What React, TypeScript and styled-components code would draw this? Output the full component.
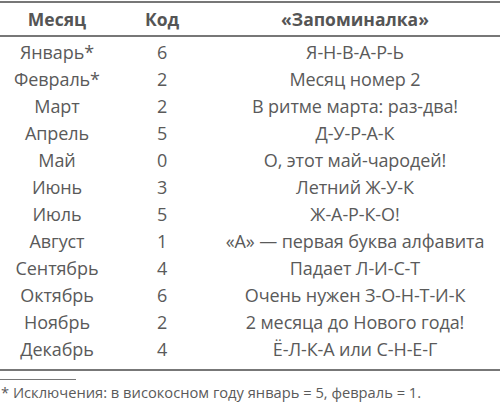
import React from "react";
import styled, { createGlobalStyle } from "styled-components";

const Global = createGlobalStyle`
  html, body { margin: 0; padding: 0; background: #fff; }
  body { font-family: "Open Sans", "Noto Sans", sans-serif; color: #555; }
`;

const Page = styled.div`
  width: 500px;
  padding-top: 1px;
`;

const Table = styled.div`
  border-top: 2px solid #777;
  border-bottom: 2px solid #777;
`;

const Row = styled.div<{ $head?: boolean; $last?: boolean }>`
  display: grid;
  grid-template-columns: 114px 96px 1fr;
  height: ${(p) => (p.$head ? "32px" : "27px")};
  align-items: center;
  padding-bottom: ${(p) => (p.$last ? "7px" : "0")};
  border-bottom: ${(p) => (p.$head ? "2px solid #777" : "none")};
  margin-bottom: ${(p) => (p.$head ? "1px" : "0")};
  font-size: ${(p) => (p.$head ? "17.5px" : "18px")};
  font-weight: ${(p) => (p.$head ? 700 : 400)};
  color: ${(p) => (p.$head ? "#555" : "#5a5a5a")};
  letter-spacing: ${(p) => (p.$head ? "0" : "-0.1px")};
`;

const Cell = styled.div`
  text-align: center;
  white-space: nowrap;
`;

const Rule = styled.div`
  width: 76px;
  height: 1px;
  background: #777;
  margin-top: 8px;
`;

const Note = styled.div`
  font-size: 14.7px;
  color: #5a5a5a;
  padding-left: 1px;
  line-height: 24px;
`;

const rows: [string, string, string][] = [
  ["Январь*", "6", "Я-Н-В-А-Р-Ь"],
  ["Февраль*", "2", "Месяц номер 2"],
  ["Март", "2", "В ритме марта: раз-два!"],
  ["Апрель", "5", "Д-У-Р-А-К"],
  ["Май", "0", "О, этот май-чародей!"],
  ["Июнь", "3", "Летний Ж-У-К"],
  ["Июль", "5", "Ж-А-Р-К-О!"],
  ["Август", "1", "«А» — первая буква алфавита"],
  ["Сентябрь", "4", "Падает Л-И-С-Т"],
  ["Октябрь", "6", "Очень нужен З-О-Н-Т-И-К"],
  ["Ноябрь", "2", "2 месяца до Нового года!"],
  ["Декабрь", "4", "Ё-Л-К-А или С-Н-Е-Г"],
];

export default function App() {
  return (
    <Page>
      <Global />
      <Table>
        <Row $head>
          <Cell>Месяц</Cell>
          <Cell>Код</Cell>
          <Cell>«Запоминалка»</Cell>
        </Row>
        {rows.map((r, i) => (
          <Row key={r[0]} $last={i === rows.length - 1}>
            <Cell>{r[0]}</Cell>
            <Cell>{r[1]}</Cell>
            <Cell>{r[2]}</Cell>
          </Row>
        ))}
      </Table>
      <Rule />
      <Note>* Исключения: в високосном году январь = 5, февраль = 1.</Note>
    </Page>
  );
}
